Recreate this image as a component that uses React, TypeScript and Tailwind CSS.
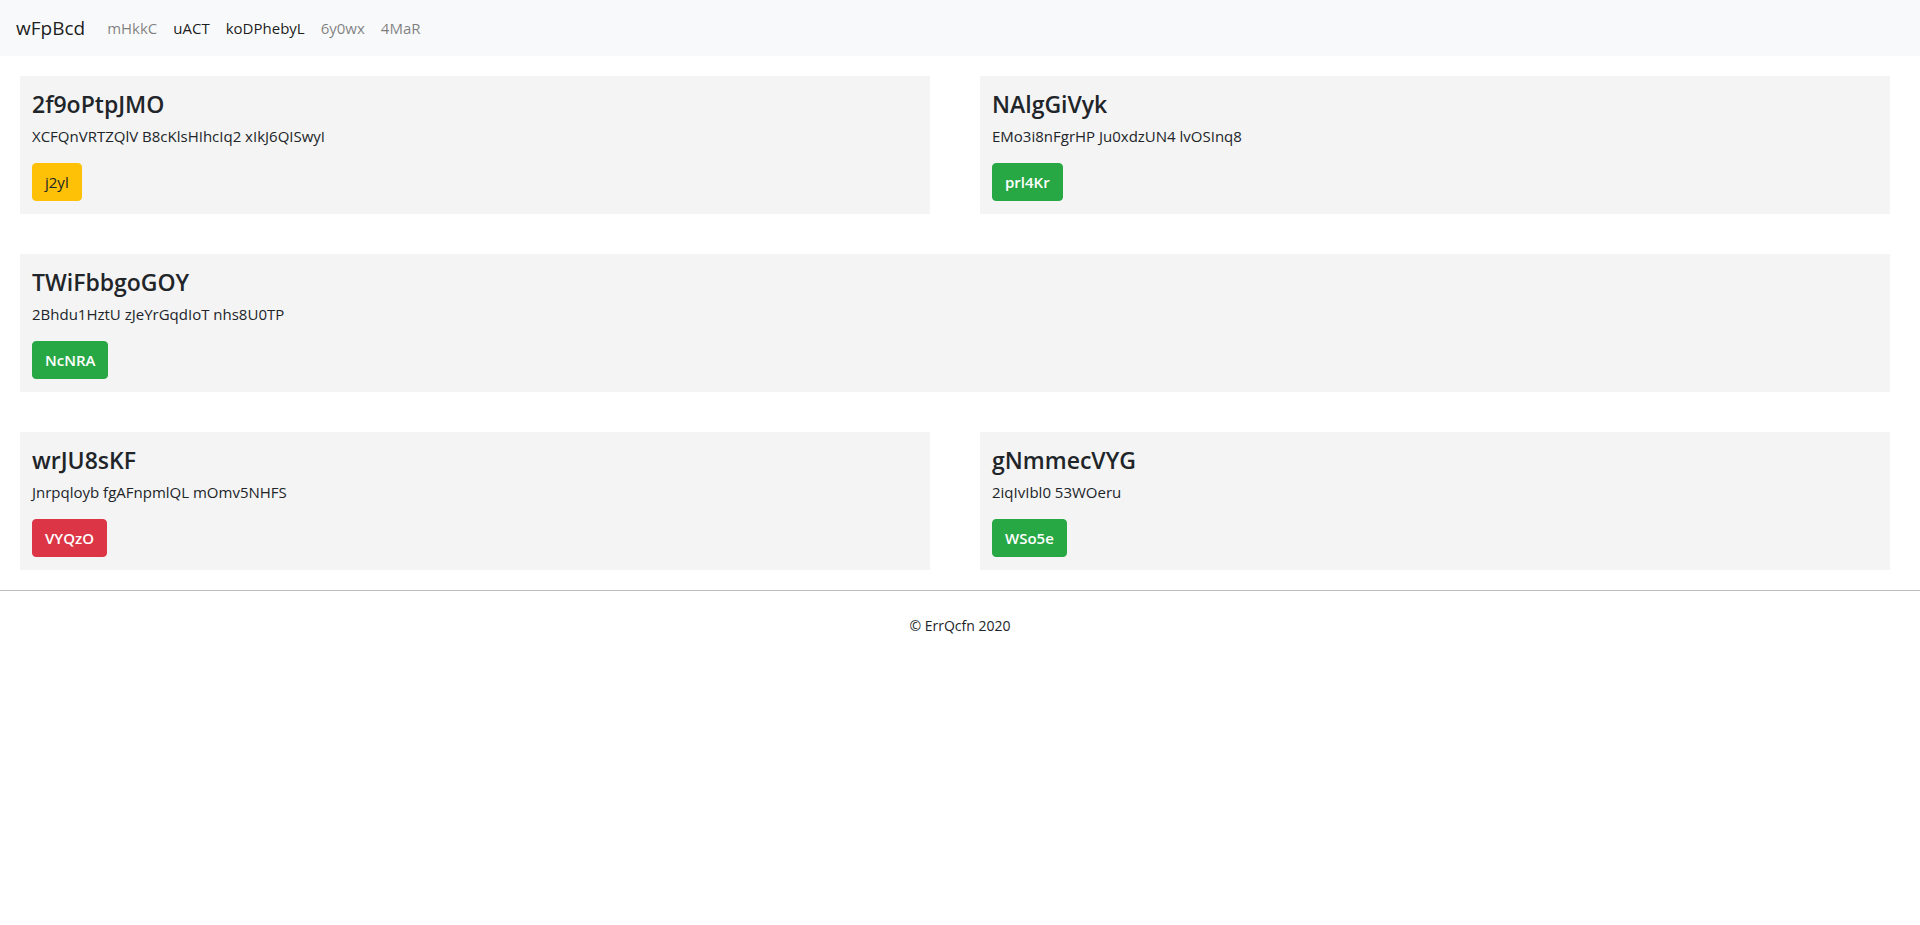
const font = { fontFamily: '"Segoe UI", "Open Sans", "Noto Sans", sans-serif' };

type Card = {
  title: string;
  text: string;
  action: string;
  tone: 'warning' | 'success' | 'danger';
};

const toneClass = {
  warning: 'bg-[#ffc107] border-[#ffc107] text-[#212529]',
  success: 'bg-[#28a745] border-[#28a745] text-white font-semibold',
  danger: 'bg-[#dc3545] border-[#dc3545] text-white font-semibold',
};

const rows: Card[][] = [
  [
    { title: '2f9oPtpJMO', text: 'XCFQnVRTZQlV B8cKlsHIhcIq2 xIkJ6QISwyI', action: 'j2yl', tone: 'warning' },
    { title: 'NAlgGiVyk', text: 'EMo3i8nFgrHP Ju0xdzUN4 lvOSInq8', action: 'prl4Kr', tone: 'success' },
  ],
  [{ title: 'TWiFbbgoGOY', text: '2Bhdu1HztU zJeYrGqdIoT nhs8U0TP', action: 'NcNRA', tone: 'success' }],
  [
    { title: 'wrJU8sKF', text: 'Jnrpqloyb fgAFnpmlQL mOmv5NHFS', action: 'VYQzO', tone: 'danger' },
    { title: 'gNmmecVYG', text: '2iqIvIbl0 53WOeru', action: 'WSo5e', tone: 'success' },
  ],
];

const links = [
  { label: 'mHkkC', active: false },
  { label: 'uACT', active: true },
  { label: 'koDPhebyL', active: true },
  { label: '6y0wx', active: false },
  { label: '4MaR', active: false },
];

function InfoCard({ card }: { card: Card }) {
  return (
    <div className="flex-1 bg-[#f4f4f4] px-3 pt-[15px] h-[138px]">
      <h4 className="text-[23px] leading-[1.2] font-semibold text-[#212529] mb-[7px]">{card.title}</h4>
      <p className="text-[15px] leading-[1.4] text-[#212529] mb-4">{card.text}</p>
      <button className={`border rounded-[4px] px-3 py-[6px] text-[15px] leading-[24px] ${toneClass[card.tone]}`}>
        {card.action}
      </button>
    </div>
  );
}

export default function App() {
  return (
    <div className="min-h-screen bg-white text-[#212529]" style={font}>
      <nav className="h-[56px] bg-[#f8f9fa] flex items-center px-4">
        <span className="text-[19px] text-black/90 mr-[14px]">wFpBcd</span>
        {links.map((l) => (
          <a key={l.label} className={`px-2 text-[15px] ${l.active ? 'text-black/90' : 'text-black/50'}`}>
            {l.label}
          </a>
        ))}
      </nav>

      <main className="pl-[20px] pr-[30px] pt-[20px] flex flex-col gap-[40px]">
        {rows.map((row, i) => (
          <div key={i} className="flex gap-[50px]">
            {row.map((c) => (
              <InfoCard key={c.title} card={c} />
            ))}
          </div>
        ))}
      </main>

      <footer className="mt-[20px] border-t border-[#bbbbbb] pt-[24px] text-center text-[14px]">
        © ErrQcfn 2020
      </footer>
    </div>
  );
}
